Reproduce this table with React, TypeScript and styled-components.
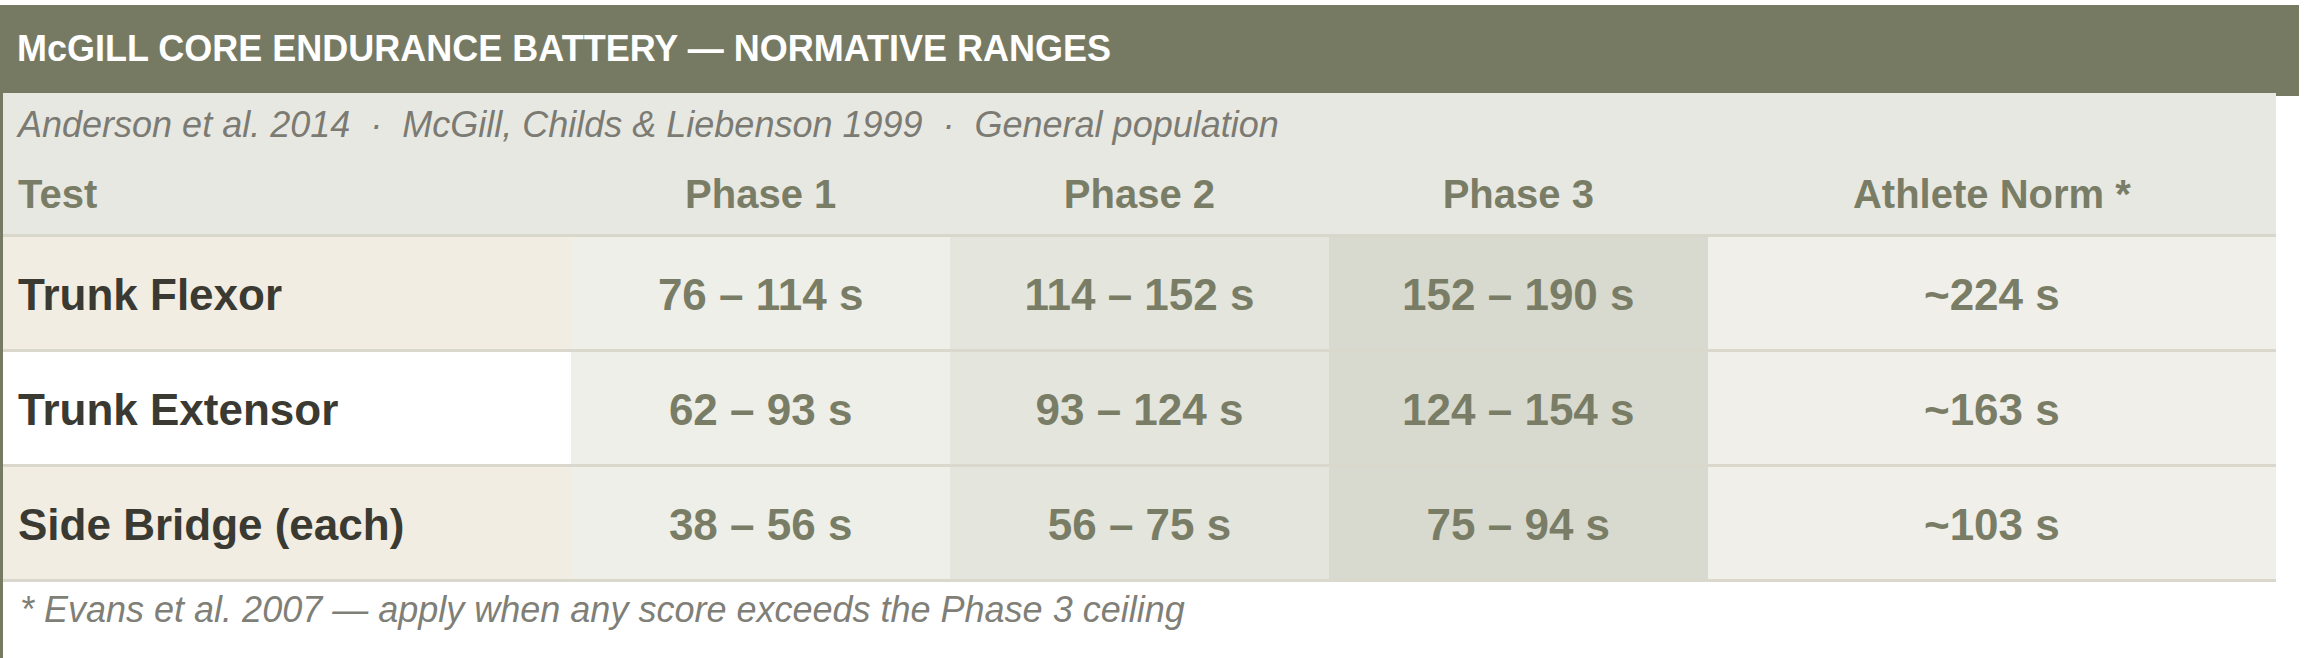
import React from 'react'
import styled, { createGlobalStyle } from 'styled-components'

const GlobalStyle = createGlobalStyle`
  html, body {
    margin: 0;
    padding: 0;
    background: #ffffff;
  }
  body {
    font-family: "Liberation Sans", Arial, Helvetica, sans-serif;
  }
`

type Band = 'p1' | 'p2' | 'p3' | 'norm'

interface Row {
  test: string
  p1: string
  p2: string
  p3: string
  norm: string
}

const rows: Row[] = [
  { test: 'Trunk Flexor', p1: '76 – 114 s', p2: '114 – 152 s', p3: '152 – 190 s', norm: '~224 s' },
  { test: 'Trunk Extensor', p1: '62 – 93 s', p2: '93 – 124 s', p3: '124 – 154 s', norm: '~163 s' },
  { test: 'Side Bridge (each)', p1: '38 – 56 s', p2: '56 – 75 s', p3: '75 – 94 s', norm: '~103 s' },
]

const bandColors: Record<Band, string> = {
  p1: '#eeefe9',
  p2: '#e4e5dd',
  p3: '#d9dacf',
  norm: '#f0efea',
}

const App: React.FC = () => {
  return (
    <>
      <GlobalStyle />
      <Page>
        <Title>McGILL CORE ENDURANCE BATTERY — NORMATIVE RANGES</Title>
        <Body>
          <Sources>
            Anderson et al. 2014 <Dot>·</Dot> McGill, Childs &amp; Liebenson 1999 <Dot>·</Dot> General population
          </Sources>
          <Table>
            <colgroup>
              <col style={{ width: '25%' }} />
              <col style={{ width: '16.6667%' }} />
              <col style={{ width: '16.6667%' }} />
              <col style={{ width: '16.6667%' }} />
              <col style={{ width: '25%' }} />
            </colgroup>
            <thead>
              <tr>
                <HeadCell $left>Test</HeadCell>
                <HeadCell>Phase 1</HeadCell>
                <HeadCell>Phase 2</HeadCell>
                <HeadCell>Phase 3</HeadCell>
                <HeadCell>Athlete Norm *</HeadCell>
              </tr>
            </thead>
            <tbody>
              {rows.map((row) => (
                <BodyRow key={row.test}>
                  <TestCell>{row.test}</TestCell>
                  <ValueCell $band="p1">{row.p1}</ValueCell>
                  <ValueCell $band="p2">{row.p2}</ValueCell>
                  <ValueCell $band="p3">{row.p3}</ValueCell>
                  <ValueCell $band="norm">{row.norm}</ValueCell>
                </BodyRow>
              ))}
            </tbody>
          </Table>
          <Footnote>* Evans et al. 2007 — apply when any score exceeds the Phase 3 ceiling</Footnote>
        </Body>
      </Page>
    </>
  )
}

const Page = styled.div`
  padding-top: 5px;
  width: 2299px;
`

// the table body slides 3px up under the bar's lower edge
const Title = styled.div`
  height: 91px;
  margin-bottom: -3px;
  padding: 0 0 3px 17px;
  background-color: #777a63;
  color: #ffffff;
  font-size: 36px;
  font-weight: 700;
  display: flex;
  align-items: center;
  box-sizing: border-box;
`

const Body = styled.div`
  width: 2276px;
  min-height: 565px;
  border-left: 3px solid #777a63;
  box-sizing: border-box;
`

const Sources = styled.div`
  background-color: #e8e8e2;
  color: #7b7b73;
  font-style: italic;
  font-size: 36px;
  line-height: 41px;
  padding: 11px 15px 0;
`

const Dot = styled.span`
  margin: 0 10px;
`

const Table = styled.table`
  width: 100%;
  border-collapse: collapse;
  table-layout: fixed;
`

const HeadCell = styled.th<{ $left?: boolean }>`
  background-color: #e8e8e2;
  color: #7a7d66;
  font-size: 40px;
  font-weight: 700;
  line-height: 46px;
  text-align: ${(p) => (p.$left ? 'left' : 'center')};
  padding: 26px 15px 17px;
  border-bottom: 3px solid #d8d7cb;
  white-space: nowrap;
`

const BodyRow = styled.tr`
  td:first-child {
    background-color: #f1ede2;
  }
  &:nth-child(even) td:first-child {
    background-color: #ffffff;
  }
`

const TestCell = styled.td`
  color: #3a3a32;
  font-size: 44px;
  font-weight: 700;
  line-height: 50px;
  padding: 33px 15px 29px;
  border-bottom: 3px solid #dad8cc;
  white-space: nowrap;
`

const ValueCell = styled.td<{ $band: Band }>`
  background-color: ${(p) => bandColors[p.$band]};
  color: #7a7d66;
  font-size: 44px;
  font-weight: 700;
  line-height: 50px;
  text-align: center;
  padding: 33px 15px 29px;
  border-bottom: 3px solid #dad8cc;
  white-space: nowrap;
`

const Footnote = styled.div`
  color: #7f7f78;
  font-style: italic;
  font-size: 36px;
  line-height: 41px;
  padding: 7px 17px 0;
`

export default App
